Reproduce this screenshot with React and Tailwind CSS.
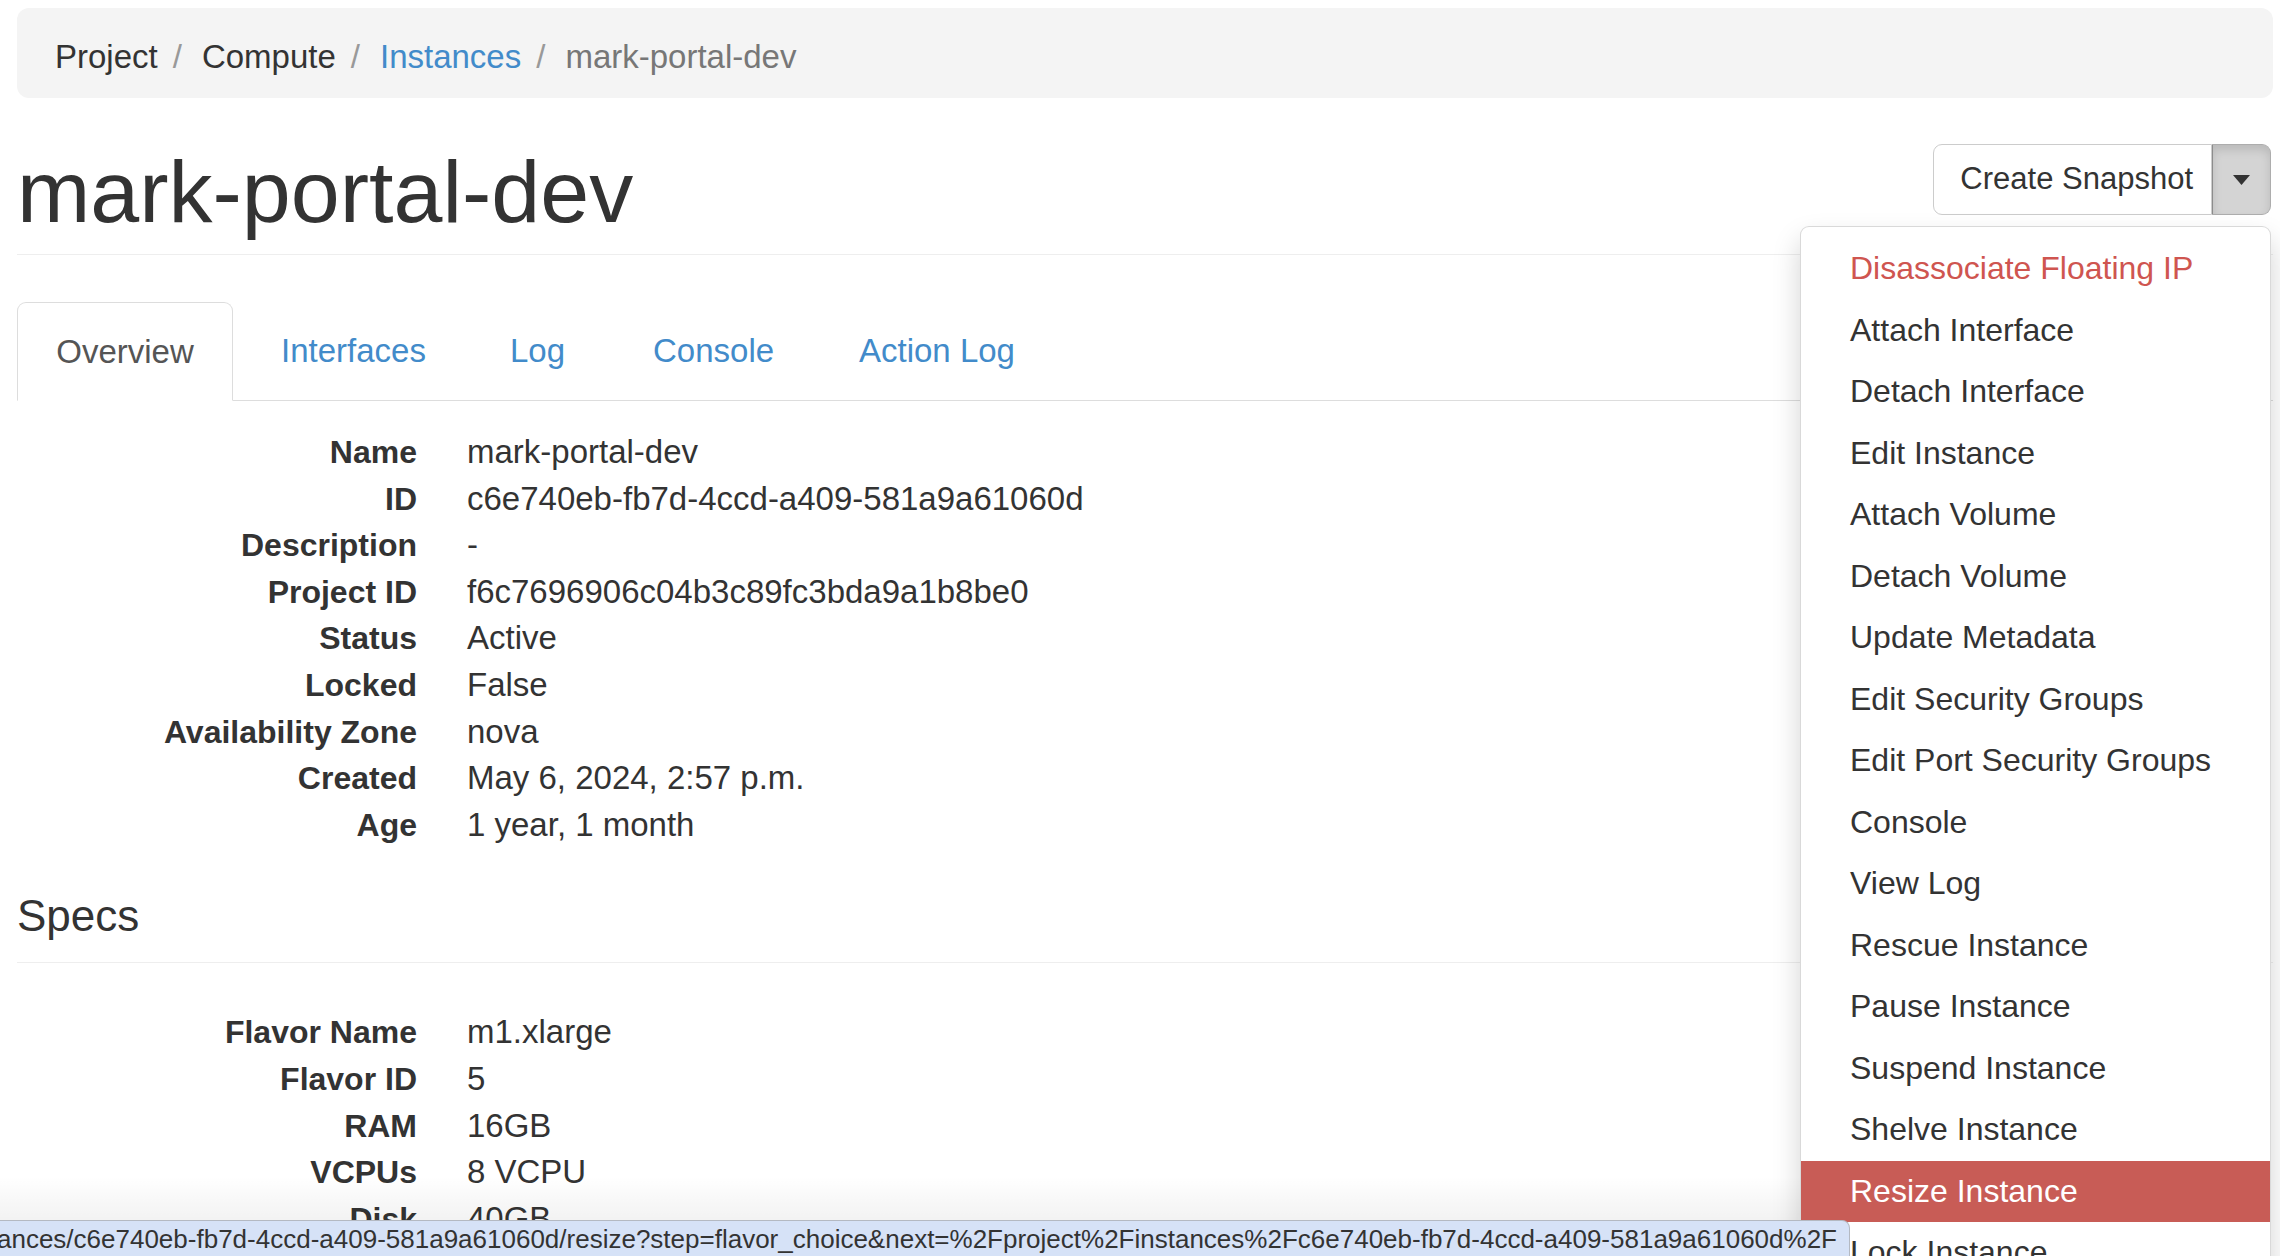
import React from 'react';

const crumbs = [
  { label: 'Project', tone: 'text-[#333]' },
  { label: 'Compute', tone: 'text-[#333]' },
  { label: 'Instances', tone: 'text-[#428bca]' },
  { label: 'mark-portal-dev', tone: 'text-[#777]' },
];

const overview = [
  ['Name', 'mark-portal-dev'],
  ['ID', 'c6e740eb-fb7d-4ccd-a409-581a9a61060d'],
  ['Description', '-'],
  ['Project ID', 'f6c7696906c04b3c89fc3bda9a1b8be0'],
  ['Status', 'Active'],
  ['Locked', 'False'],
  ['Availability Zone', 'nova'],
  ['Created', 'May 6, 2024, 2:57 p.m.'],
  ['Age', '1 year, 1 month'],
];

const specs = [
  ['Flavor Name', 'm1.xlarge'],
  ['Flavor ID', '5'],
  ['RAM', '16GB'],
  ['VCPUs', '8 VCPU'],
  ['Disk', '40GB'],
];

const actions = [
  'Disassociate Floating IP',
  'Attach Interface',
  'Detach Interface',
  'Edit Instance',
  'Attach Volume',
  'Detach Volume',
  'Update Metadata',
  'Edit Security Groups',
  'Edit Port Security Groups',
  'Console',
  'View Log',
  'Rescue Instance',
  'Pause Instance',
  'Suspend Instance',
  'Shelve Instance',
  'Resize Instance',
  'Lock Instance',
];

const DetailRows = ({ rows }) => (
  <div className="flex flex-col">
    {rows.map(([label, value]) => (
      <div key={label} className="grid grid-cols-[400px_1fr] leading-[46.6px]">
        <span className="text-right text-[32px] font-bold">{label}</span>
        <span className="pl-[50px] text-[33px]">{value}</span>
      </div>
    ))}
  </div>
);

const ActionsMenu = () => (
  <div className="absolute right-0 top-full z-10 mt-[11px] w-[471px] rounded-[9px] border border-black/15 bg-white pt-[11px] pb-[11px] shadow-[0_14px_28px_rgba(0,0,0,0.175)]">
    {actions.map((item, i) => {
      let tone = 'text-[#333]';
      if (i === 0) tone = 'text-[#cf5550]';
      if (item === 'Resize Instance') tone = 'bg-[#c85c56] text-white';
      return (
        <div key={item} className={`h-[61.5px] pl-[49px] text-[32px] leading-[61.5px] whitespace-nowrap ${tone}`}>
          {item}
        </div>
      );
    })}
  </div>
);

export default function App() {
  return (
    <div className="relative h-[1256px] w-[2280px] overflow-hidden bg-white font-['Helvetica_Neue','Liberation_Sans',Arial,sans-serif] text-[#333]">
      <div className="pl-[17px] pr-[7px] pt-[8px]">
        {/* breadcrumb */}
        <div className="flex h-[90px] items-start rounded-[12px] bg-[#f4f4f4] pl-[38px] pt-[25px] text-[33px] leading-[47px]">
          {crumbs.map((c, i) => (
            <React.Fragment key={c.label}>
              {i > 0 && <span className="ml-[15px] mr-[20px] text-[#999]">/</span>}
              <span className={c.tone}>{c.label}</span>
            </React.Fragment>
          ))}
        </div>

        {/* header */}
        <div className="mt-[46px] flex items-start justify-between border-b border-[#eee] pb-[15px]">
          <h1 className="text-[88px] font-normal leading-[95px]">mark-portal-dev</h1>
          <div className="relative mr-[2px] flex h-[71px]">
            <div className="flex items-center rounded-l-[9px] border border-[#ccc] bg-white pl-[26px] pr-[18px] text-[31px]">
              Create Snapshot
            </div>
            <div className="flex w-[59px] items-center justify-center rounded-r-[9px] border border-l-[#8c8c8c] border-[#adadad] bg-[#d4d4d4] shadow-[inset_0_5px_10px_rgba(0,0,0,0.125)]">
              <svg width="17" height="10" viewBox="0 0 17 10">
                <path d="M0 0 L17 0 L8.5 10 Z" fill="#333" />
              </svg>
            </div>
            <ActionsMenu />
          </div>
        </div>

        {/* tabs */}
        <div className="mt-[47px] flex h-[99px] border-b border-[#ddd] text-[33px]">
          <div className="-mb-px flex w-[216px] items-center justify-center rounded-t-[9px] border border-[#ddd] border-b-white bg-white text-[#555]">
            Overview
          </div>
          <div className="flex w-[242px] items-center pl-[48px] text-[#428bca]">Interfaces</div>
          <div className="flex w-[143px] items-center pl-[35px] text-[#428bca]">Log</div>
          <div className="flex w-[206px] items-center pl-[35px] text-[#428bca]">Console</div>
          <div className="flex items-center pl-[35px] text-[#428bca]">Action Log</div>
        </div>

        <div className="mt-[28px]">
          <DetailRows rows={overview} />
        </div>

        <h4 className="mt-[44px] border-b border-[#eee] pb-[23px] text-[44px] font-normal leading-[47px]">Specs</h4>

        <div className="mt-[46px]">
          <DetailRows rows={specs} />
        </div>
      </div>

      {/* browser status bubble */}
      <div className="pointer-events-none absolute bottom-[35px] left-0 h-[45px] w-[1850px] bg-linear-to-b from-transparent to-black/[0.05]" />
      <div className="absolute bottom-0 left-0 z-20 flex h-[36px] w-[1850px] justify-end overflow-hidden rounded-tr-[8px] border-t border-r border-[#b4b9c2] bg-[#d6e2f7] pr-[12px] text-[26px] leading-[36px] whitespace-nowrap text-[#333]">
        <span>ances/c6e740eb-fb7d-4ccd-a409-581a9a61060d/resize?step=flavor_choice&amp;next=%2Fproject%2Finstances%2Fc6e740eb-fb7d-4ccd-a409-581a9a61060d%2F</span>
      </div>
    </div>
  );
}
